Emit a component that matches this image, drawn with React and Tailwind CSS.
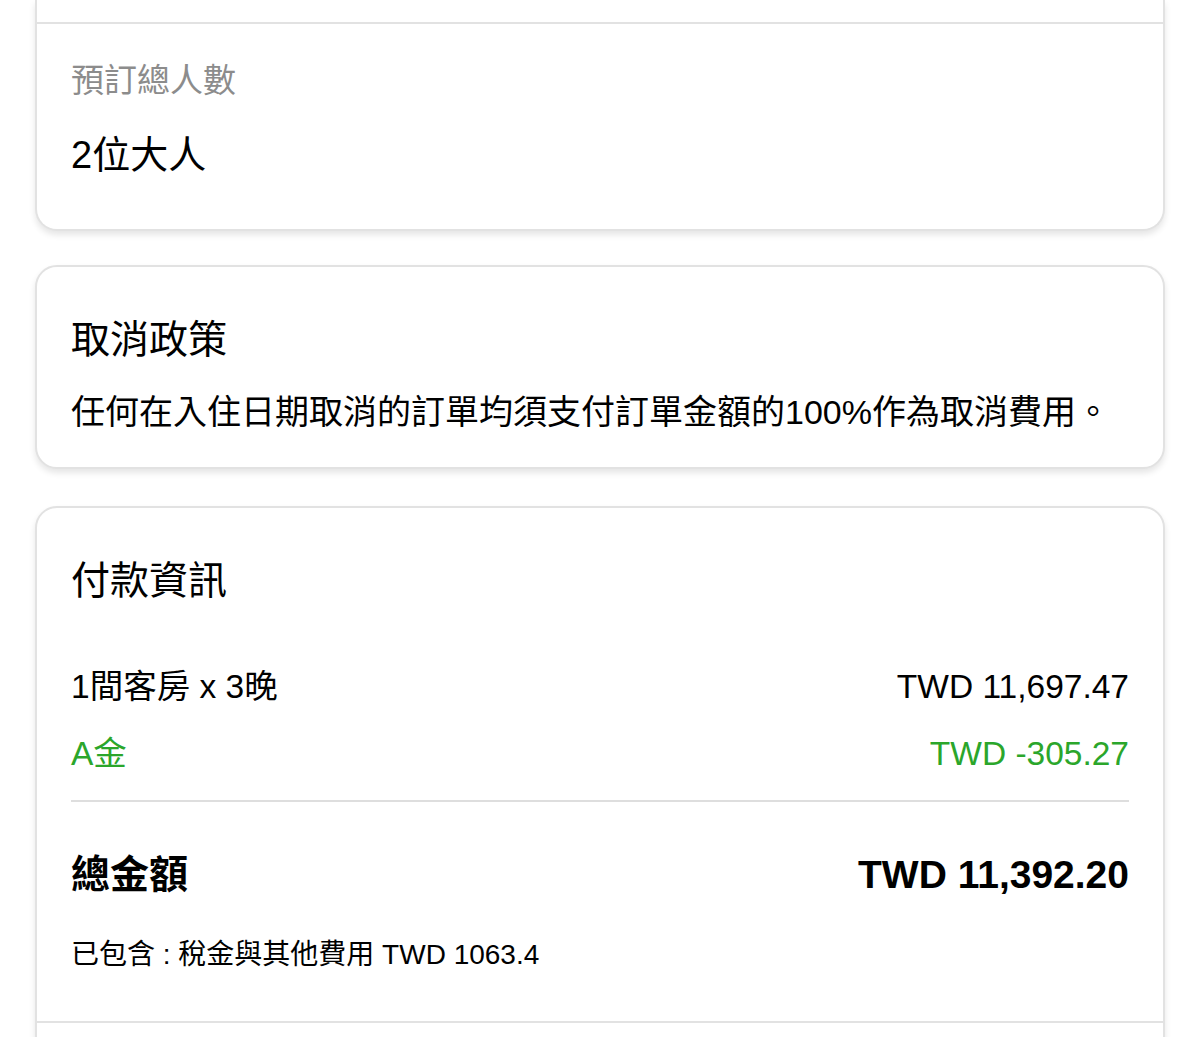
import React from 'react';

const font = { fontFamily: '"Liberation Sans", "Noto Sans CJK TC", sans-serif' };

function Card({ children, className = '' }) {
    return (
        <div className={`mx-[35px] bg-white border-2 border-[#e2e2e2] rounded-[22px] shadow-[0_4px_6px_rgba(0,0,0,0.10)] ${className}`}>
            {children}
        </div>
    );
}

function Row({ label, value, green }) {
    const color = green ? 'text-[#2ba62b]' : 'text-black';
    return (
        <div className={`flex justify-between items-center text-[33.5px] leading-[40px] ${color}`}>
            <span>{label}</span>
            <span>{value}</span>
        </div>
    );
}

export default function App() {
    return (
        <div className="min-h-screen bg-white pb-10" style={font}>
            {/* guests card, top part cut off */}
            <Card className="border-t-0 rounded-t-none">
                <div className="h-[24px] border-b-2 border-[#e2e2e2]" />
                <div className="pl-[34px] pr-[34px] pt-[37px] pb-[52px]">
                    <p className="text-[33px] leading-[40px] text-[#8c8c8c]">預訂總人數</p>
                    <p className="mt-[32px] text-[38px] leading-[44px] text-black">2位大人</p>
                </div>
            </Card>

            {/* cancellation policy */}
            <Card className="mt-[34px]">
                <div className="pl-[34px] pr-[34px] pt-[51px] pb-[35px]">
                    <h2 className="text-[39px] leading-[44px] text-black">取消政策</h2>
                    <p className="mt-[30px] text-[34px] leading-[40px] text-black">
                        任何在入住日期取消的訂單均須支付訂單金額的100%作為取消費用。
                    </p>
                </div>
            </Card>

            {/* payment info */}
            <Card className="mt-[37px]">
                <div className="pl-[34px] pr-[34px] pt-[51px] pb-[49px]">
                    <h2 className="text-[39px] leading-[44px] text-black">付款資訊</h2>
                    <div className="mt-[64px] flex flex-col gap-[27px]">
                        <Row label="1間客房 x 3晚" value="TWD 11,697.47" />
                        <Row label="A金" value="TWD -305.27" green />
                    </div>
                    <div className="mt-[26px] h-[2px] bg-[#dedede]" />
                    <div className="mt-[51px] flex justify-between items-center text-[39px] leading-[44px] font-bold text-black">
                        <span>總金額</span>
                        <span>TWD 11,392.20</span>
                    </div>
                    <p className="mt-[41px] text-[28px] leading-[34px] text-black">
                        已包含 : 稅金與其他費用 TWD 1063.4
                    </p>
                </div>
                <div className="h-[2px] bg-[#e2e2e2]" />
                <div className="h-[80px]" />
            </Card>
        </div>
    );
}
